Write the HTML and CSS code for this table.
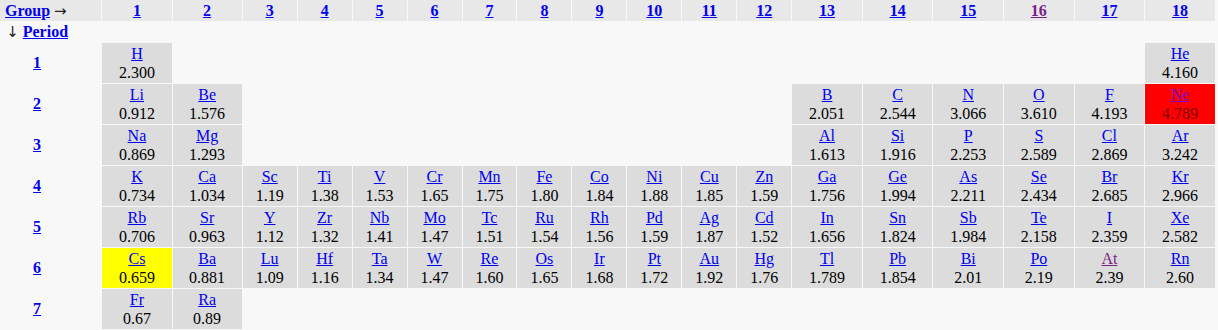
FILE: index.html
```html
<!DOCTYPE html>
<html>
<head>
<meta charset="utf-8">
<link rel="stylesheet" href="styles.css">
</head>
<body>
<table class="pt">
<colgroup>
<col class="c-per"><col class="c-mark">
<col class="c-w"><col class="c-w">
<col class="c-n"><col class="c-n"><col class="c-n"><col class="c-n"><col class="c-n"><col class="c-n"><col class="c-n"><col class="c-n"><col class="c-n"><col class="c-n">
<col class="c-r"><col class="c-r"><col class="c-r"><col class="c-r"><col class="c-r"><col class="c-r">
</colgroup>
<tr class="hdr">
<th class="grp" colspan="2"><a href="#">Group</a> <span class="arr">→</span></th>
<th><a href="#">1</a></th><th><a href="#">2</a></th><th><a href="#">3</a></th><th><a href="#">4</a></th><th><a href="#">5</a></th><th><a href="#">6</a></th><th><a href="#">7</a></th><th><a href="#">8</a></th><th><a href="#">9</a></th><th><a href="#">10</a></th><th><a href="#">11</a></th><th><a href="#">12</a></th><th><a href="#">13</a></th><th><a href="#">14</a></th><th><a href="#">15</a></th><th><a class="visited" href="#">16</a></th><th><a href="#">17</a></th><th><a href="#">18</a></th>
</tr>
<tr class="prow">
<th class="plabel"><span class="arr">↓</span> <a href="#">Period</a></th><td colspan="19"></td>
</tr>
<tr class="row">
<th class="pn"><a href="#">1</a></th><td></td>
<td class="el"><a href="#">H</a><br>2.300</td>
<td colspan="16"></td>
<td class="el"><a href="#">He</a><br>4.160</td>
</tr>
<tr class="row">
<th class="pn"><a href="#">2</a></th><td></td>
<td class="el"><a href="#">Li</a><br>0.912</td>
<td class="el"><a href="#">Be</a><br>1.576</td>
<td colspan="10"></td>
<td class="el"><a href="#">B</a><br>2.051</td>
<td class="el"><a href="#">C</a><br>2.544</td>
<td class="el"><a href="#">N</a><br>3.066</td>
<td class="el"><a href="#">O</a><br>3.610</td>
<td class="el"><a href="#">F</a><br>4.193</td>
<td class="el max"><a href="#">Ne</a><br>4.789</td>
</tr>
<tr class="row">
<th class="pn"><a href="#">3</a></th><td></td>
<td class="el"><a href="#">Na</a><br>0.869</td>
<td class="el"><a href="#">Mg</a><br>1.293</td>
<td colspan="10"></td>
<td class="el"><a href="#">Al</a><br>1.613</td>
<td class="el"><a href="#">Si</a><br>1.916</td>
<td class="el"><a href="#">P</a><br>2.253</td>
<td class="el"><a href="#">S</a><br>2.589</td>
<td class="el"><a href="#">Cl</a><br>2.869</td>
<td class="el"><a href="#">Ar</a><br>3.242</td>
</tr>
<tr class="row">
<th class="pn"><a href="#">4</a></th><td></td>
<td class="el"><a href="#">K</a><br>0.734</td>
<td class="el"><a href="#">Ca</a><br>1.034</td>
<td class="el"><a href="#">Sc</a><br>1.19</td>
<td class="el"><a href="#">Ti</a><br>1.38</td>
<td class="el"><a href="#">V</a><br>1.53</td>
<td class="el"><a href="#">Cr</a><br>1.65</td>
<td class="el"><a href="#">Mn</a><br>1.75</td>
<td class="el"><a href="#">Fe</a><br>1.80</td>
<td class="el"><a href="#">Co</a><br>1.84</td>
<td class="el"><a href="#">Ni</a><br>1.88</td>
<td class="el"><a href="#">Cu</a><br>1.85</td>
<td class="el"><a href="#">Zn</a><br>1.59</td>
<td class="el"><a href="#">Ga</a><br>1.756</td>
<td class="el"><a href="#">Ge</a><br>1.994</td>
<td class="el"><a href="#">As</a><br>2.211</td>
<td class="el"><a href="#">Se</a><br>2.434</td>
<td class="el"><a href="#">Br</a><br>2.685</td>
<td class="el"><a href="#">Kr</a><br>2.966</td>
</tr>
<tr class="row">
<th class="pn"><a href="#">5</a></th><td></td>
<td class="el"><a href="#">Rb</a><br>0.706</td>
<td class="el"><a href="#">Sr</a><br>0.963</td>
<td class="el"><a href="#">Y</a><br>1.12</td>
<td class="el"><a href="#">Zr</a><br>1.32</td>
<td class="el"><a href="#">Nb</a><br>1.41</td>
<td class="el"><a href="#">Mo</a><br>1.47</td>
<td class="el"><a href="#">Tc</a><br>1.51</td>
<td class="el"><a href="#">Ru</a><br>1.54</td>
<td class="el"><a href="#">Rh</a><br>1.56</td>
<td class="el"><a href="#">Pd</a><br>1.59</td>
<td class="el"><a href="#">Ag</a><br>1.87</td>
<td class="el"><a href="#">Cd</a><br>1.52</td>
<td class="el"><a href="#">In</a><br>1.656</td>
<td class="el"><a href="#">Sn</a><br>1.824</td>
<td class="el"><a href="#">Sb</a><br>1.984</td>
<td class="el"><a href="#">Te</a><br>2.158</td>
<td class="el"><a href="#">I</a><br>2.359</td>
<td class="el"><a href="#">Xe</a><br>2.582</td>
</tr>
<tr class="row">
<th class="pn"><a href="#">6</a></th><td></td>
<td class="el min"><a href="#">Cs</a><br>0.659</td>
<td class="el"><a href="#">Ba</a><br>0.881</td>
<td class="el"><a href="#">Lu</a><br>1.09</td>
<td class="el"><a href="#">Hf</a><br>1.16</td>
<td class="el"><a href="#">Ta</a><br>1.34</td>
<td class="el"><a href="#">W</a><br>1.47</td>
<td class="el"><a href="#">Re</a><br>1.60</td>
<td class="el"><a href="#">Os</a><br>1.65</td>
<td class="el"><a href="#">Ir</a><br>1.68</td>
<td class="el"><a href="#">Pt</a><br>1.72</td>
<td class="el"><a href="#">Au</a><br>1.92</td>
<td class="el"><a href="#">Hg</a><br>1.76</td>
<td class="el"><a href="#">Tl</a><br>1.789</td>
<td class="el"><a href="#">Pb</a><br>1.854</td>
<td class="el"><a href="#">Bi</a><br>2.01</td>
<td class="el"><a href="#">Po</a><br>2.19</td>
<td class="el"><a class="visited" href="#">At</a><br>2.39</td>
<td class="el"><a href="#">Rn</a><br>2.60</td>
</tr>
<tr class="row">
<th class="pn"><a href="#">7</a></th><td></td>
<td class="el"><a href="#">Fr</a><br>0.67</td>
<td class="el"><a href="#">Ra</a><br>0.89</td>
<td colspan="16"></td>
</tr>
</table>
</body>
</html>
```

FILE: styles.css
```css
html, body {
  margin: 0;
  padding: 0;
  background: #f8f8f8;
}
body {
  font-family: "Liberation Serif", "Times New Roman", serif;
  font-size: 16px;
  color: #000;
}
a {
  color: #0000ee;
  text-decoration: underline;
}
a.visited {
  color: #7a1f86;
}
.arr {
  font-family: "DejaVu Sans", sans-serif;
  font-weight: normal;
  color: #222;
  font-size: 15px;
  line-height: 1;
}
.pt {
  border-collapse: separate;
  border-spacing: 1px;
  margin: -1px 0 0 -1px;
  table-layout: fixed;
  width: 1217px;
}
.c-per { width: 74px; }
.c-mark { width: 26px; }
.c-w { width: 69px; }
.c-n { width: 53.8px; }
.c-r { width: 69.4px; }
.pt th, .pt td {
  padding: 0;
  text-align: center;
  vertical-align: middle;
}
.hdr th {
  background: #e8e8e8;
  height: 21px;
  line-height: 21px;
  font-weight: bold;
}
.hdr th.grp {
  text-align: left;
  padding-left: 5px;
}
.prow th, .prow td {
  height: 20px;
  line-height: 20px;
}
.plabel {
  font-weight: bold;
}
.row td, .row th {
  height: 40px;
}
.pn {
  font-weight: bold;
}
.el {
  background: #dcdcdc;
  line-height: 19px;
  padding-top: 1px;
}
.el.max {
  background: #ff0000;
  color: #800000;
}
.el.max a {
  color: #7a00c8;
}
.el.min {
  background: #ffff00;
}
```
